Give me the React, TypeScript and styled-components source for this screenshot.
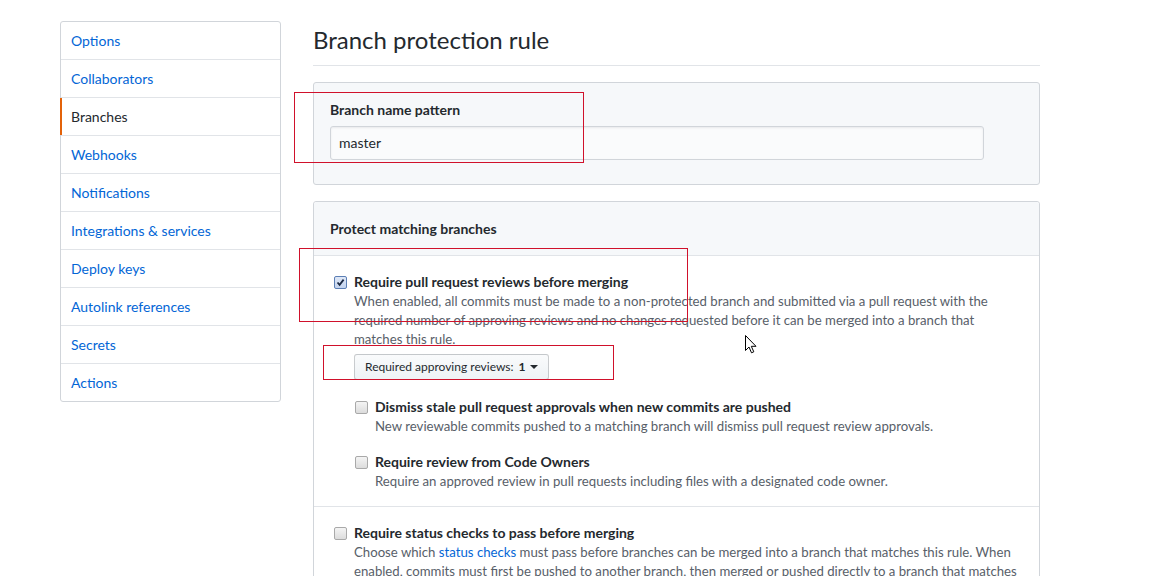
import styled, { createGlobalStyle } from "styled-components";

const GlobalStyle = createGlobalStyle`
  html, body {
    margin: 0;
    padding: 0;
    overflow: hidden;
    background: #fff;
  }
  body {
    font-family: Lato, "Noto Sans", "Liberation Sans", sans-serif;
    font-size: 14px;
    line-height: 1.5;
    color: #24292e;
  }
`;

const Page = styled.div`
  position: relative;
  width: 1172px;
  height: 576px;
  overflow: hidden;
`;

const Layout = styled.div`
  display: flex;
  gap: 32px;
  padding: 21px 0 0 60px;
`;

const Menu = styled.nav`
  width: 221px;
  flex-shrink: 0;
  align-self: flex-start;
  border: 1px solid #d1d5da;
  border-radius: 3px;
  box-sizing: border-box;
`;

const MenuItem = styled.a<{ $selected?: boolean }>`
  display: block;
  height: 38px;
  box-sizing: border-box;
  padding: 8px 10px;
  line-height: 21px;
  font-size: 14px;
  text-decoration: none;
  color: ${(p) => (p.$selected ? "#24292e" : "#0366d6")};
  border-top: 1px solid #e1e4e8;
  position: relative;

  &:first-child {
    border-top: 0;
    height: 37px;
  }

  ${(p) =>
    p.$selected &&
    `
    &::before {
      content: "";
      position: absolute;
      left: -1px;
      top: 0;
      bottom: 0;
      width: 2px;
      background: #e36209;
    }
  `}
`;

const Main = styled.main`
  width: 727px;
`;

const Subhead = styled.div`
  padding: 4px 0 10px;
  margin-bottom: 16px;
  border-bottom: 1px solid #e1e4e8;
`;

const Title = styled.h2`
  margin: 0;
  font-size: 24px;
  font-weight: 400;
  line-height: 30px;
`;

const Box = styled.div<{ $gray?: boolean }>`
  border: 1px solid #d1d5da;
  border-radius: 3px;
  background: ${(p) => (p.$gray ? "#f6f8fa" : "#fff")};
  margin-bottom: 16px;
`;

const FormGroup = styled.div`
  padding: 16px 16px 24px;
`;

const Label = styled.label`
  display: block;
  font-weight: 700;
  font-size: 14px;
  line-height: 21px;
  margin-bottom: 6px;
`;

const TextInput = styled.div`
  width: 654px;
  height: 34px;
  box-sizing: border-box;
  padding: 6px 8px;
  font-size: 14px;
  line-height: 20px;
  background: #fafbfc;
  border: 1px solid #d1d5da;
  border-radius: 3px;
  box-shadow: inset 0 1px 2px rgba(27, 31, 35, 0.075);
`;

const BoxHeader = styled.div`
  padding: 16px;
  background: #f6f8fa;
  border-bottom: 1px solid #e1e4e8;
  font-weight: 700;
  line-height: 21px;
  border-radius: 3px 3px 0 0;
`;

const BoxRow = styled.div`
  padding: 15px 16px 15px;
  & + & {
    border-top: 1px solid #e1e4e8;
    padding-top: 15px;
  }
`;

const Check = styled.div<{ $nested?: boolean }>`
  display: flex;
  gap: 7px;
  margin-top: ${(p) => (p.$nested ? "15px" : "0")};
`;

const Box13 = styled.span<{ $checked?: boolean }>`
  flex-shrink: 0;
  width: 13px;
  height: 13px;
  margin: 5px 0 0 4px;
  box-sizing: border-box;
  border: 1px solid ${(p) => (p.$checked ? "#5c7fb5" : "#a9a9a9")};
  border-radius: 2px;
  background: ${(p) =>
    p.$checked
      ? "linear-gradient(#dfe8f7, #c3d3ee)"
      : "linear-gradient(#f4f4f4, #dcdcdc)"};
  display: flex;
  align-items: center;
  justify-content: center;
`;

const CheckBody = styled.div``;

const CheckLabel = styled.div`
  font-weight: 700;
  font-size: 14px;
  line-height: 21px;
`;

const Note = styled.p`
  margin: 0;
  font-size: 13.2px;
  line-height: 19px;
  color: #586069;
`;

const Link = styled.a`
  color: #0366d6;
  text-decoration: none;
`;

const SelectButton = styled.button`
  margin-top: 5px;
  display: inline-flex;
  align-items: center;
  gap: 5px;
  padding: 2px 10px;
  font-family: inherit;
  font-size: 12px;
  line-height: 20px;
  font-weight: 400;
  color: #24292e;
  background: linear-gradient(-180deg, #fafbfc, #eff3f6 90%);
  border: 1px solid rgba(27, 31, 35, 0.2);
  border-radius: 3px;
`;

const Caret = styled.span`
  width: 0;
  height: 0;
  border-left: 4px solid transparent;
  border-right: 4px solid transparent;
  border-top: 4px solid #24292e;
`;

const Nested = styled.div`
  margin: 16px 0 0 -3px;
`;

const Annotation = styled.div`
  position: absolute;
  border: 1px solid #d0112b;
  pointer-events: none;
`;

const Cursor = styled.svg`
  position: absolute;
  left: 745px;
  top: 335px;
`;

const menu = [
  "Options",
  "Collaborators",
  "Branches",
  "Webhooks",
  "Notifications",
  "Integrations & services",
  "Deploy keys",
  "Autolink references",
  "Secrets",
  "Actions",
];

function CheckMark() {
  return (
    <svg width="9" height="9" viewBox="0 0 9 9">
      <path d="M1.5 4.5 L3.6 6.8 L7.6 1.6" fill="none" stroke="#1b2a44" strokeWidth="1.8" />
    </svg>
  );
}

export default function App() {
  return (
    <Page>
      <GlobalStyle />
      <Layout>
        <Menu>
          {menu.map((m) => (
            <MenuItem key={m} $selected={m === "Branches"}>
              {m}
            </MenuItem>
          ))}
        </Menu>
        <Main>
          <Subhead>
            <Title>Branch protection rule</Title>
          </Subhead>
          <Box $gray>
            <FormGroup>
              <Label>Branch name pattern</Label>
              <TextInput>master</TextInput>
            </FormGroup>
          </Box>
          <Box>
            <BoxHeader>Protect matching branches</BoxHeader>
            <BoxRow>
              <Check>
                <Box13 $checked>
                  <CheckMark />
                </Box13>
                <CheckBody>
                  <CheckLabel>Require pull request reviews before merging</CheckLabel>
                  <Note>
                    When enabled, all commits must be made to a non-protected branch and submitted via a pull
                    request with the required number of approving reviews and no changes requested before it
                    can be merged into a branch that matches this rule.
                  </Note>
                  <SelectButton>
                    Required approving reviews: <b>1</b>
                    <Caret />
                  </SelectButton>
                  <Nested>
                    <Check>
                      <Box13 />
                      <CheckBody>
                        <CheckLabel>Dismiss stale pull request approvals when new commits are pushed</CheckLabel>
                        <Note>
                          New reviewable commits pushed to a matching branch will dismiss pull request review
                          approvals.
                        </Note>
                      </CheckBody>
                    </Check>
                    <Check $nested>
                      <Box13 />
                      <CheckBody>
                        <CheckLabel>Require review from Code Owners</CheckLabel>
                        <Note>
                          Require an approved review in pull requests including files with a designated code
                          owner.
                        </Note>
                      </CheckBody>
                    </Check>
                  </Nested>
                </CheckBody>
              </Check>
            </BoxRow>
            <BoxRow>
              <Check>
                <Box13 />
                <CheckBody>
                  <CheckLabel>Require status checks to pass before merging</CheckLabel>
                  <Note>
                    Choose which <Link>status checks</Link> must pass before branches can be merged into a
                    branch that matches this rule. When enabled, commits must first be pushed to another
                    branch, then merged or pushed directly to a branch that matches this rule after status
                    checks have passed.
                  </Note>
                </CheckBody>
              </Check>
            </BoxRow>
          </Box>
        </Main>
      </Layout>

      <Annotation style={{ left: 294, top: 92, width: 288, height: 69 }} />
      <Annotation style={{ left: 299, top: 248, width: 387, height: 72 }} />
      <Annotation style={{ left: 323, top: 345, width: 289, height: 33 }} />

      <Cursor width="13" height="19" viewBox="0 0 13 19">
        <path d="M0.5 0.5 L0.5 15.5 L4 12 L6.5 17.8 L8.8 16.8 L6.3 11.3 L11 11.3 Z" fill="#fff" stroke="#000" strokeWidth="1" />
      </Cursor>
    </Page>
  );
}
